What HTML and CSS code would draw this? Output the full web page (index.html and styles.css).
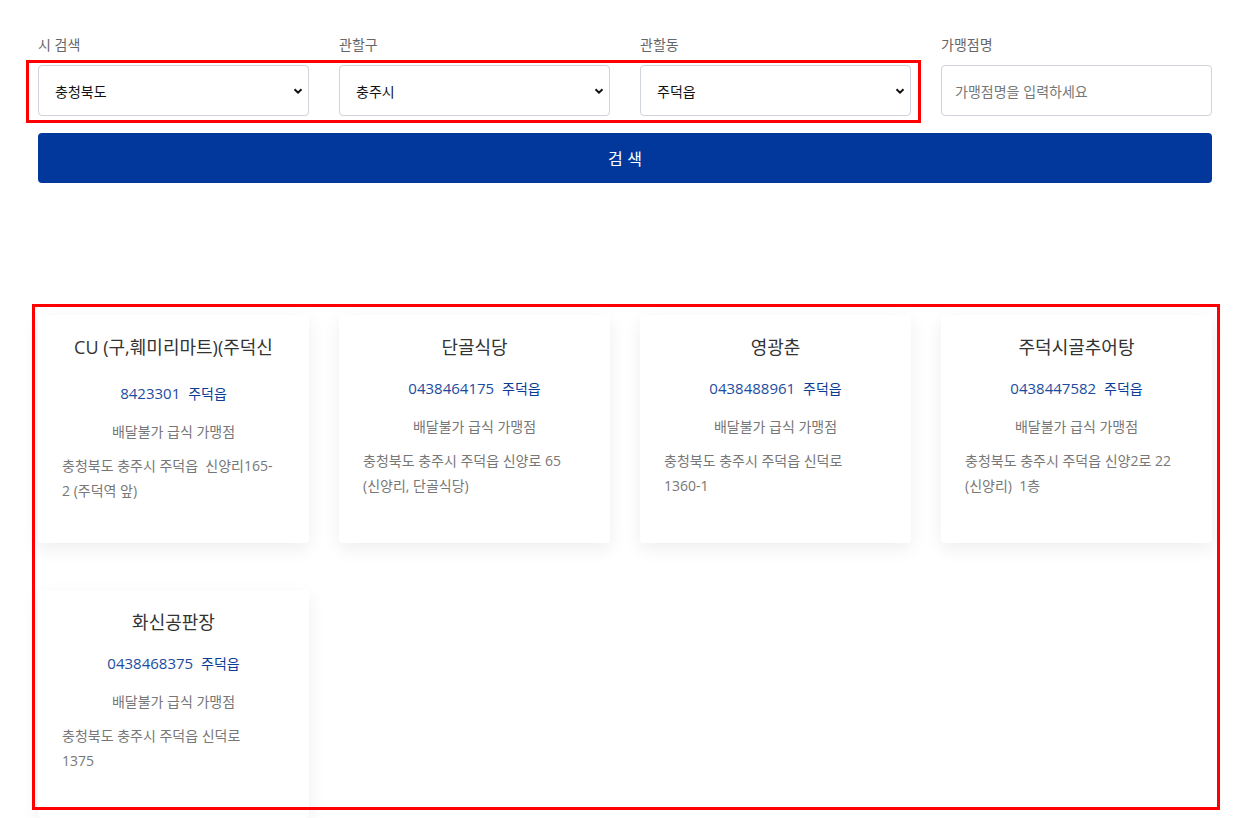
FILE: index.html
```
<!DOCTYPE html>
<html lang="ko">
<head>
	<meta charset="UTF-8">
	<meta name="viewport" content="width=device-width, initial-scale=1.0">
	<title>가맹점 검색</title>
	<link rel="stylesheet" href="styles.css">
</head>
<body>
	<div class="page">
		<!-- 검색 폼 -->
		<form class="search">
			<div class="fields">
				<div class="field">
					<label>시 검색</label>
					<select class="select">
						<option>충청북도</option>
					</select>
				</div>
				<div class="field">
					<label>관할구</label>
					<select class="select">
						<option>충주시</option>
					</select>
				</div>
				<div class="field">
					<label>관할동</label>
					<select class="select">
						<option>주덕읍</option>
					</select>
				</div>
				<div class="field">
					<label>가맹점명</label>
					<input class="input" type="text" placeholder="가맹점명을 입력하세요">
				</div>
			</div>
			<button type="button" class="btn_search">검 색</button>
		</form>

		<!-- 가맹점 목록 -->
		<div class="list">
			<div class="card">
				<div class="card_title tall">CU (구,훼미리마트)(주덕신</div>
				<div class="card_tel">8423301 <span class="dong">주덕읍</span></div>
				<div class="card_type">배달불가 급식 가맹점</div>
				<div class="card_addr">충청북도 충주시 주덕읍&nbsp; 신양리165-2 (주덕역 앞)</div>
			</div>
			<div class="card">
				<div class="card_title">단골식당</div>
				<div class="card_tel">0438464175 <span class="dong">주덕읍</span></div>
				<div class="card_type">배달불가 급식 가맹점</div>
				<div class="card_addr">충청북도 충주시 주덕읍 신양로 65 (신양리, 단골식당)</div>
			</div>
			<div class="card">
				<div class="card_title">영광춘</div>
				<div class="card_tel">0438488961 <span class="dong">주덕읍</span></div>
				<div class="card_type">배달불가 급식 가맹점</div>
				<div class="card_addr">충청북도 충주시 주덕읍 신덕로 1360-1</div>
			</div>
			<div class="card">
				<div class="card_title">주덕시골추어탕</div>
				<div class="card_tel">0438447582 <span class="dong">주덕읍</span></div>
				<div class="card_type">배달불가 급식 가맹점</div>
				<div class="card_addr">충청북도 충주시 주덕읍 신양2로 22 (신양리)&nbsp; 1층</div>
			</div>
			<div class="card">
				<div class="card_title">화신공판장</div>
				<div class="card_tel">0438468375 <span class="dong">주덕읍</span></div>
				<div class="card_type">배달불가 급식 가맹점</div>
				<div class="card_addr">충청북도 충주시 주덕읍 신덕로 1375</div>
			</div>
		</div>
	</div>

	<!-- 표시 박스 -->
	<div class="mark mark_form"></div>
	<div class="mark mark_list"></div>
</body>
</html>
```

FILE: styles.css
```
* {
	margin: 0;
	padding: 0;
	box-sizing: border-box;
}
body {
	font-family: "Open Sans", "Noto Sans CJK KR", sans-serif;
	font-size: 14px;
	color: #333;
	background: #fff;
	position: relative;
}
.page {
	width: 1174px;
	margin-left: 38px;
	padding-top: 34px;
}
/*검색 폼*/
.fields {
	display: grid;
	grid-template-columns: repeat(4, 1fr);
	column-gap: 30px;
}
.field label {
	display: block;
	color: #666;
	line-height: 21px;
	margin-bottom: 10px;
}
.select,
.input {
	width: 100%;
	height: 51px;
	border: 1px solid #ced4da;
	border-radius: 4px;
	background-color: #fff;
	font-family: "Noto Sans CJK KR", sans-serif;
	font-size: 14px;
	color: #111;
	padding: 0 16px;
	outline: none;
}
.select {
	appearance: none;
	-webkit-appearance: none;
	background-image: url("data:image/svg+xml,%3Csvg xmlns='http://www.w3.org/2000/svg' width='10' height='8' viewBox='0 0 10 8'%3E%3Cpath d='M1.5 2.2 5 5.6 8.5 2.2' fill='none' stroke='%23111' stroke-width='2'/%3E%3C/svg%3E");
	background-repeat: no-repeat;
	background-position: right 5px center;
}
.input {
	padding-left: 13px;
}
.input::placeholder {
	color: #777;
}
.btn_search {
	display: block;
	width: 100%;
	height: 50px;
	margin-top: 17px;
	border: none;
	border-radius: 4px;
	background-color: #02389c;
	color: #fff;
	font-family: "Noto Sans CJK KR", sans-serif;
	font-size: 16px;
}
/*목록*/
.list {
	display: grid;
	grid-template-columns: repeat(4, 1fr);
	column-gap: 30px;
	row-gap: 47px;
	margin-top: 132px;
}
.card {
	height: 228px;
	padding: 19px 24px 0;
	background: #fff;
	border-radius: 4px;
	box-shadow: 0 6px 18px rgba(0, 0, 0, 0.07);
}
.card_title {
	font-size: 18px;
	line-height: 27px;
	height: 27px;
	padding: 0 6px;
	overflow: hidden;
	text-align: center;
	color: #333;
}
/*긴 제목은 아래로 조금 밀림*/
.card_title.tall {
	height: 32px;
	padding-bottom: 5px;
}
.card_tel {
	margin-top: 17px;
	font-size: 15px;
	line-height: 21px;
	text-align: center;
	color: #1c4c9f;
}
.card_tel .dong {
	margin-left: 4px;
	font-size: 14px;
	color: #0a3b96;
}
.card_type {
	margin-top: 17px;
	line-height: 21px;
	text-align: center;
	color: #777;
}
.card_addr {
	margin-top: 11px;
	padding-right: 11px;
	line-height: 25px;
	word-break: keep-all;
	color: #777;
}
/*빨간 표시 박스*/
.mark {
	position: absolute;
	border: 3px solid #f00;
	pointer-events: none;
}
.mark_form {
	left: 26px;
	top: 60px;
	width: 895px;
	height: 63px;
}
.mark_list {
	left: 32px;
	top: 304px;
	width: 1188px;
	height: 506px;
}
```
